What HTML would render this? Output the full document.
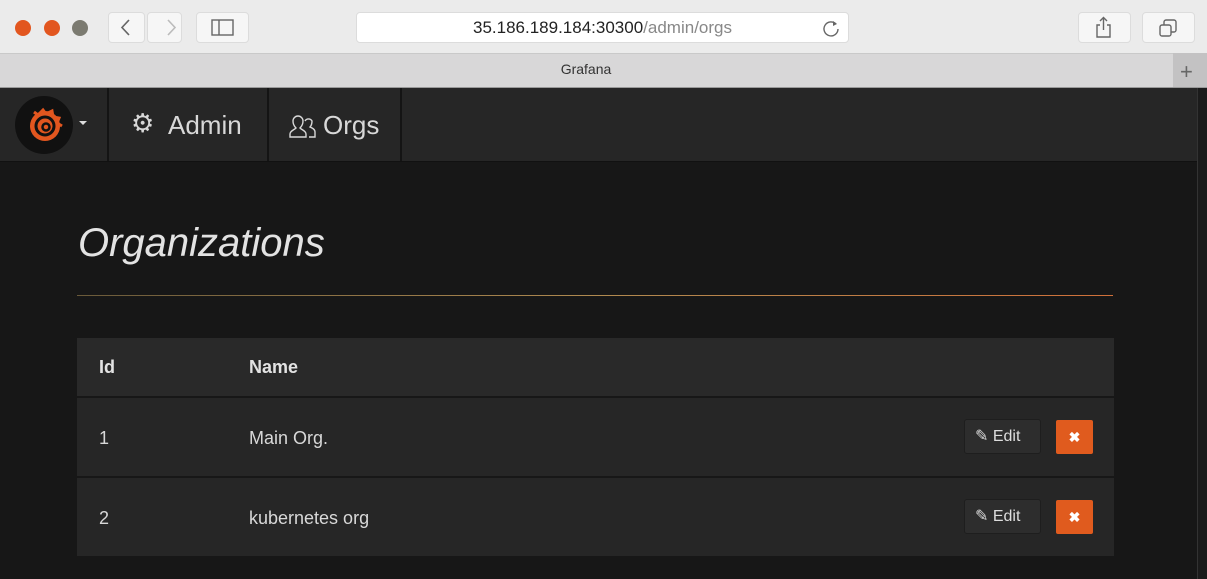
<!DOCTYPE html><html><head><style>
body{margin:0;width:1207px;height:579px;overflow:hidden;background:#171717;font-family:"Liberation Sans",sans-serif;position:relative}
.a{position:absolute}
.btn{position:absolute;background:#f6f6f6;border:1px solid #dcdcdc;border-radius:4px;box-sizing:border-box}
</style></head><body>
<div class="a" style="left:0;top:0;width:1207px;height:53px;background:#ebebeb"></div>
<div class="a" style="left:15px;top:20px;width:16px;height:16px;border-radius:50%;background:#e2561f"></div>
<div class="a" style="left:44px;top:20px;width:16px;height:16px;border-radius:50%;background:#e2561f"></div>
<div class="a" style="left:72px;top:20px;width:16px;height:16px;border-radius:50%;background:#7b7a70"></div>
<div class="btn" style="left:108px;top:12px;width:37px;height:31px"></div>
<div class="btn" style="left:147px;top:12px;width:35px;height:31px"></div>
<svg class="a" style="left:108px;top:12px" width="80" height="31"><path d="M21 8l-7 7.5 7 7.5" stroke="#666" stroke-width="1.6" fill="none"/><path d="M60 8l7 7.5-7 7.5" stroke="#bbb" stroke-width="1.6" fill="none"/></svg>
<div class="btn" style="left:196px;top:12px;width:53px;height:31px"></div>
<svg class="a" style="left:211px;top:19px" width="24" height="18"><rect x="1" y="1" width="21" height="15" fill="none" stroke="#666" stroke-width="1.4"/><line x1="8" y1="1" x2="8" y2="16" stroke="#666" stroke-width="1.4"/></svg>
<div class="btn" style="left:356px;top:12px;width:493px;height:31px;background:#fff"></div>
<div class="a" style="left:356px;top:18px;width:493px;text-align:center;font-size:17px;color:#222">35.186.189.184:30300<span style="color:#888">/admin/orgs</span></div>
<svg class="a" style="left:821px;top:18px" width="20" height="20"><path d="M15 6A7 7 0 1 0 17 11" stroke="#666" stroke-width="1.4" fill="none"/><path d="M12 3l4 3-4 2z" fill="#666"/></svg>
<div class="btn" style="left:1078px;top:12px;width:53px;height:31px"></div>
<div class="btn" style="left:1142px;top:12px;width:53px;height:31px"></div>
<svg class="a" style="left:1094px;top:16px" width="20" height="22"><path d="M6 9H3v12h13V9h-3M9.5 14V2M6 5l3.5-3.5L13 5" stroke="#666" stroke-width="1.4" fill="none"/></svg>
<svg class="a" style="left:1158px;top:18px" width="22" height="20"><rect x="2" y="7" width="11" height="11" rx="2" fill="none" stroke="#666" stroke-width="1.4"/><path d="M6 7V4a2 2 0 0 1 2-2h8a2 2 0 0 1 2 2v8a2 2 0 0 1-2 2h-3" fill="none" stroke="#666" stroke-width="1.4"/></svg>
<div class="a" style="left:0;top:53px;width:1207px;height:34px;background:#d8d7d8;border-top:1px solid #c9c9c9;box-sizing:border-box"></div>
<div class="a" style="left:0;top:61px;width:1172px;text-align:center;font-size:14px;color:#333">Grafana</div>
<div class="a" style="left:1173px;top:53px;width:34px;height:34px;background:#c3c2c3"></div>
<div class="a" style="left:1180px;top:59px;font-size:22px;color:#666">+</div>
<div class="a" style="left:0;top:87px;width:1207px;height:1px;background:#9a9a9a"></div>
<div class="a" style="left:0;top:88px;width:1197px;height:73px;background:#262626;border-bottom:1px solid #111"></div>
<div class="a" style="left:107px;top:88px;width:2px;height:73px;background:#141414"></div>
<div class="a" style="left:267px;top:88px;width:2px;height:73px;background:#141414"></div>
<div class="a" style="left:400px;top:88px;width:2px;height:73px;background:#141414"></div>
<div class="a" style="left:15px;top:96px;width:58px;height:58px;border-radius:50%;background:#111"></div>
<svg class="a" style="left:22px;top:102px" width="46" height="46" viewBox="0 0 46 46"><circle cx="23" cy="24" r="15" fill="#e2561f"/><path d="M12 10l4 3 5-5 3 4 6-3 1 6 6 1-2 5 5 3" fill="#e2561f" stroke="#e2561f" stroke-width="3"/><circle cx="23" cy="24" r="9" fill="none" stroke="#111" stroke-width="3"/><circle cx="24" cy="25" r="3.5" fill="none" stroke="#111" stroke-width="2.5"/></svg>
<div class="a" style="left:79px;top:121px;width:0;height:0;border:4px solid transparent;border-top-color:#ddd"></div>
<div class="a" style="left:131px;top:108px;font-size:26px;color:#d8d8d8">⚙</div>
<div class="a" style="left:168px;top:110px;font-size:26px;color:#d8d8d8">Admin</div>
<svg class="a" style="left:288px;top:113px" width="30" height="26"><path d="M2 24v-3c0-3 4-4 6-6-2-2-3-4-3-7a5 5 0 0 1 10 0c0 3-1 5-3 7 2 2 6 3 6 6v3zM17 8a4 4 0 0 1 7 0c0 3-1 5-2 6 2 1 5 2 5 5v5h-6" fill="none" stroke="#d8d8d8" stroke-width="1.4"/></svg>
<div class="a" style="left:323px;top:110px;font-size:26px;color:#d8d8d8">Orgs</div>
<div class="a" style="left:1197px;top:88px;width:10px;height:491px;background:#1b1b1b;border-left:1px solid #333"></div>
<div class="a" style="left:78px;top:221px;font-size:40px;font-style:italic;color:#e3e3e3">Organizations</div>
<div class="a" style="left:77px;top:295px;width:1036px;height:1px;background:linear-gradient(90deg,#6a5a3a,#b08a50 50%,#d0703a)"></div>
<div class="a" style="left:77px;top:338px;width:1037px;height:58px;background:#292929"></div>
<div class="a" style="left:77px;top:398px;width:1037px;height:78px;background:#262626"></div>
<div class="a" style="left:77px;top:478px;width:1037px;height:78px;background:#262626"></div>
<div class="a" style="left:99px;top:357px;font-size:18px;font-weight:bold;color:#e3e3e3">Id</div>
<div class="a" style="left:249px;top:357px;font-size:18px;font-weight:bold;color:#e3e3e3">Name</div>
<div class="a" style="left:99px;top:428px;font-size:18px;color:#d8d8d8">1</div>
<div class="a" style="left:249px;top:428px;font-size:18px;color:#d8d8d8">Main Org.</div>
<div class="a" style="left:99px;top:508px;font-size:18px;color:#d8d8d8">2</div>
<div class="a" style="left:249px;top:508px;font-size:18px;color:#d8d8d8">kubernetes org</div>
<div class="a" style="left:964px;top:419px;width:77px;height:35px;background:#2d2d2d;border:1px solid #1e1e1e;border-radius:3px;box-sizing:border-box;color:#ddd;font-size:16px;line-height:33px;text-indent:10px">✎ Edit</div>
<div class="a" style="left:1056px;top:420px;width:37px;height:34px;background:#e05b1e;border-radius:2px;color:#fff;text-align:center;line-height:34px;font-weight:bold;font-size:14px">✖</div>
<div class="a" style="left:964px;top:499px;width:77px;height:35px;background:#2d2d2d;border:1px solid #1e1e1e;border-radius:3px;box-sizing:border-box;color:#ddd;font-size:16px;line-height:33px;text-indent:10px">✎ Edit</div>
<div class="a" style="left:1056px;top:500px;width:37px;height:34px;background:#e05b1e;border-radius:2px;color:#fff;text-align:center;line-height:34px;font-weight:bold;font-size:14px">✖</div>
</body></html>
